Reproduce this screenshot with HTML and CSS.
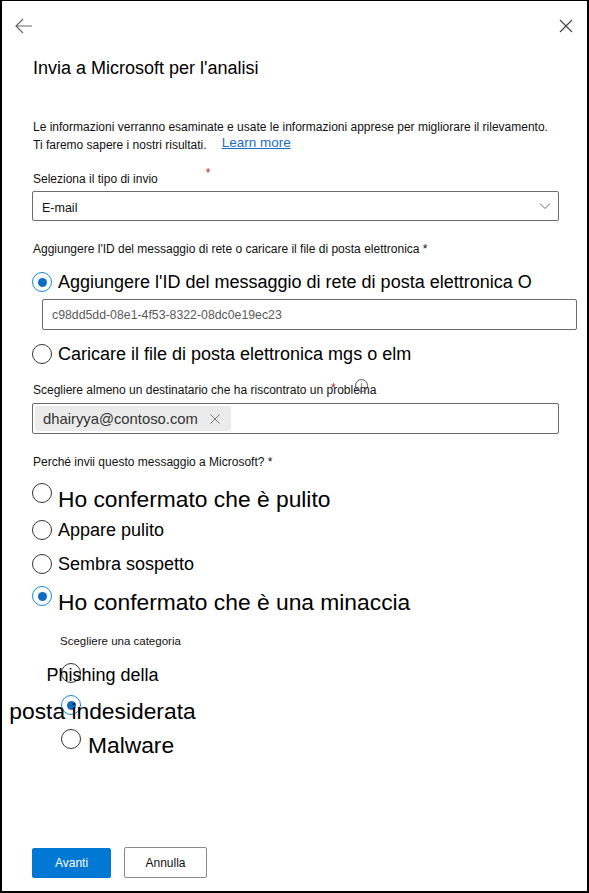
FILE: index.html
```html
<!DOCTYPE html>
<html lang="it">
<head>
<meta charset="utf-8">
<title>Invia a Microsoft per l'analisi</title>
<link rel="stylesheet" href="styles.css">
</head>
<body>
<div class="panel">
  <div class="topbar">
    <button class="icon-btn back" aria-label="Indietro">
      <svg width="20" height="20" viewBox="0 0 20 20"><path d="M2 10 H18 M9 3 L2 10 L9 17" fill="none" stroke="#666" stroke-width="1.2"/></svg>
    </button>
    <button class="icon-btn close" aria-label="Chiudi">
      <svg width="14" height="14" viewBox="0 0 14 14"><path d="M1 1 L13 13 M13 1 L1 13" fill="none" stroke="#444" stroke-width="1.2"/></svg>
    </button>
  </div>

  <h1 class="title">Invia a Microsoft per l'analisi</h1>

  <p class="desc">Le informazioni verranno esaminate e usate le informazioni apprese per migliorare il rilevamento.<br>Ti faremo sapere i nostri risultati.<a class="learn" href="#">Learn more</a></p>

  <div class="label first">Seleziona il tipo di invio<span class="req req-a">*</span></div>
  <div class="select">
    <span class="select-value">E-mail</span>
    <svg width="12" height="8" viewBox="0 0 12 8"><path d="M1 1.5 L6 6.5 L11 1.5" fill="none" stroke="#666" stroke-width="1"/></svg>
  </div>

  <div class="label second">Aggiungere l'ID del messaggio di rete o caricare il file di posta elettronica *</div>
  <div class="radio-row md first-radio">
    <span class="radio checked"></span><span class="rtext">Aggiungere l'ID del messaggio di rete di posta elettronica O</span>
  </div>
  <div class="text-input">c98dd5dd-08e1-4f53-8322-08dc0e19ec23</div>
  <div class="radio-row md upload">
    <span class="radio"></span><span class="rtext">Caricare il file di posta elettronica mgs o elm</span>
  </div>

  <div class="label third">Scegliere almeno un destinatario che ha riscontrato un problema<span class="req req-b">*</span><span class="info">i</span></div>
  <div class="people">
    <span class="chip">dhairyya@contoso.com<svg width="12" height="12" viewBox="0 0 12 12"><path d="M1.5 1.5 L10.5 10.5 M10.5 1.5 L1.5 10.5" fill="none" stroke="#777" stroke-width="1"/></svg></span>
  </div>

  <div class="label fourth">Perché invii questo messaggio a Microsoft? *</div>
  <div class="radio-row lg r-clean">
    <span class="radio"></span><span class="rtext">Ho confermato che è pulito</span>
  </div>
  <div class="radio-row md r-appare">
    <span class="radio"></span><span class="rtext">Appare pulito</span>
  </div>
  <div class="radio-row md r-sembra">
    <span class="radio"></span><span class="rtext">Sembra sospetto</span>
  </div>
  <div class="radio-row lg r-threat">
    <span class="radio checked"></span><span class="rtext">Ho confermato che è una minaccia</span>
  </div>

  <div class="sublabel">Scegliere una categoria</div>
  <div class="cat-item md c-phish">
    <span class="radio"></span><span class="ctext">Phishing della</span>
  </div>
  <div class="cat-item lg c-spam">
    <span class="radio checked"></span><span class="ctext">posta indesiderata</span>
  </div>
  <div class="radio-row lg c-malware">
    <span class="radio"></span><span class="rtext">Malware</span>
  </div>

  <div class="actions">
    <button class="btn primary">Avanti</button>
    <button class="btn secondary">Annulla</button>
  </div>
</div>
</body>
</html>
```

FILE: styles.css
```css
* { box-sizing: border-box; }
html, body { margin: 0; padding: 0; background: #fff; }
body { font-family: "Liberation Sans", Arial, sans-serif; color: #201f1e; }

.panel {
  width: 589px;
  height: 893px;
  border-style: solid;
  border-color: #000;
  border-width: 1px 2px 2px 2px;
  padding: 0 28px 13px 30px;
  display: flex;
  flex-direction: column;
  align-items: flex-start;
}

.topbar {
  width: calc(100% + 58px);
  margin-left: -30px;
  height: 55px;
  display: flex;
  justify-content: space-between;
  align-items: flex-start;
  padding: 15px 14px 0 12px;
}
.icon-btn { border: 0; background: none; padding: 0; margin: 0; display: block; line-height: 0; }
.icon-btn.close { margin-top: 3px; }

.title {
  margin: 0;
  font-size: 18px;
  line-height: 24px;
  font-weight: 400;
  color: #000;
  padding-left: 1px;
}

.desc {
  margin: 38px 0 0 0;
  font-size: 12px;
  line-height: 18px;
  white-space: nowrap;
  padding-left: 1px;
  color: #111;
}
.learn {
  font-size: 13.5px;
  color: #1a6fc6;
  text-decoration: underline;
  margin-left: 15px;
  position: relative;
  top: -2px;
}

.label {
  font-size: 12px;
  line-height: 16px;
  white-space: nowrap;
  padding-left: 1px;
  color: #111;
  position: relative;
}
.label.first { margin-top: 17px; }
.label.second { margin-top: 20px; }
.label.third { margin-top: 18px; }
.label.fourth { margin-top: 20px; }
.req { color: #a4262c; }
.req-a { margin-left: 48px; position: relative; top: -6px; }
.req-b { position: absolute; left: 299px; top: -2px; }
.info {
  position: absolute;
  left: 323px;
  top: -3px;
  width: 13px;
  height: 13px;
  border: 1px solid #555;
  border-radius: 50%;
  font-size: 9px;
  line-height: 11px;
  text-align: center;
  color: #555;
}

.select {
  margin-top: 4px;
  width: 527px;
  height: 30px;
  border: 1px solid #6b6b6b;
  border-radius: 2px;
  display: flex;
  align-items: center;
  justify-content: space-between;
  padding: 0 7px 0 9px;
  font-size: 12.5px;
  color: #111;
}
.select-value { position: relative; top: 2px; }

.radio-row {
  display: flex;
  align-items: flex-start;
  gap: 6px;
  white-space: nowrap;
  color: #000;
}
.radio {
  flex: none;
  width: 20px;
  height: 20px;
  border: 1px solid #333;
  border-radius: 50%;
  background: #fff;
  position: relative;
}
.radio.checked { border-color: #1a86d8; }
.radio.checked::after {
  content: "";
  position: absolute;
  left: 4.5px;
  top: 4.5px;
  width: 9px;
  height: 9px;
  border-radius: 50%;
  background: #0f6cc4;
}
.md { font-size: 18px; line-height: 20px; }
.lg { font-size: 22.8px; line-height: 30px; }
.md .rtext { position: relative; top: 0; }
.lg .rtext { position: relative; top: 1px; }

.first-radio { margin-top: 15px; }
.text-input {
  margin-top: 7px;
  margin-left: 10px;
  width: 535px;
  height: 31px;
  border: 1px solid #6b6b6b;
  border-radius: 2px;
  padding: 1px 9px 0;
  font-size: 12.3px;
  line-height: 29px;
  color: #5a5a5a;
}
.upload { margin-top: 14px; }

.people {
  margin-top: 5px;
  width: 527px;
  height: 31px;
  border: 1px solid #6b6b6b;
  border-radius: 2px;
  padding: 2px;
}
.chip {
  display: inline-flex;
  align-items: center;
  gap: 11px;
  height: 25px;
  padding: 0 10px 0 8px;
  background: #ebebeb;
  border-radius: 2px;
  font-size: 14.8px;
  color: #333;
}

.r-clean { margin-top: 13px; }
.r-appare { margin-top: 7px; }
.r-sembra { margin-top: 14px; }
.r-threat { margin-top: 12px; }

.sublabel {
  margin-top: 17px;
  margin-left: 28px;
  font-size: 11.5px;
  line-height: 16px;
  color: #111;
}

.cat-item {
  position: relative;
  width: 191px;
  margin-left: -25px;
  text-align: center;
  white-space: nowrap;
  color: #000;
}
.cat-item .radio { position: absolute; left: 54px; top: 0; }
.cat-item .ctext { position: relative; }
.c-phish { margin-top: 14px; line-height: 22px; }
.c-phish .ctext { top: 1px; }
.c-spam { margin-top: 10px; }
.c-spam .ctext { top: 1px; }
.c-malware { margin-top: 4px; margin-left: 29px; gap: 7px; }

.actions {
  margin-top: auto;
  display: flex;
  align-items: flex-end;
  gap: 13px;
}
.btn {
  font-family: "Liberation Sans", Arial, sans-serif;
  font-size: 12px;
  border-radius: 2px;
  cursor: pointer;
}
.btn.primary {
  width: 79px;
  height: 30px;
  background: #0078d4;
  border: 1px solid #0078d4;
  color: #fff;
}
.btn.secondary {
  width: 83px;
  height: 31px;
  background: #fff;
  border: 1px solid #8a8886;
  color: #111;
}
```
